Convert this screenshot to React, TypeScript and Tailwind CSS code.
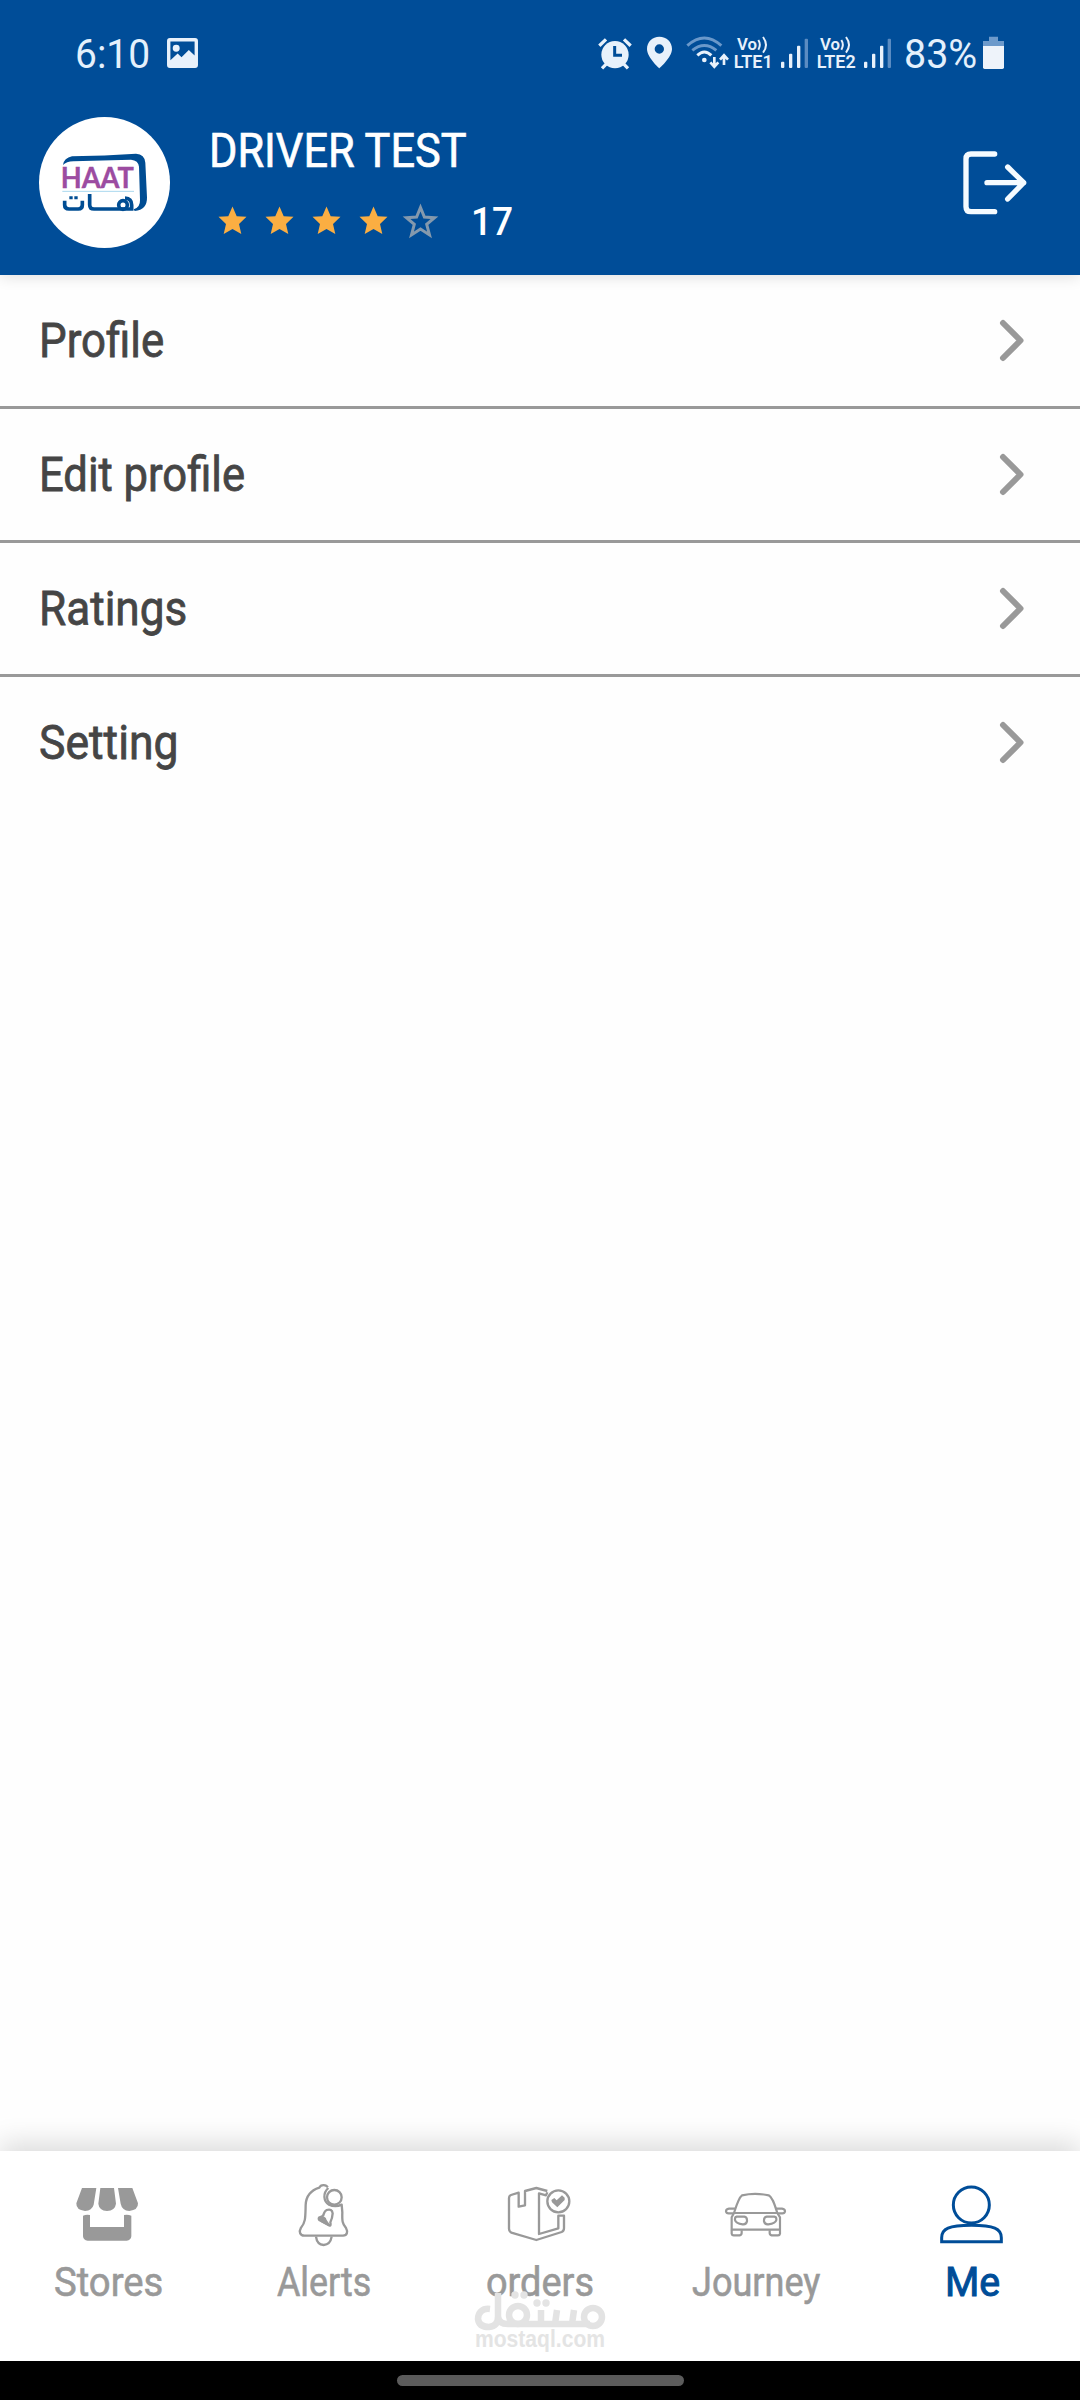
import { useLayoutEffect, useRef, useState } from "react";
import type { ReactNode } from "react";

/** One line of text, condensed or widened to an exact width. */
function FitText({ text, width, className }: { text: string; width: number; className?: string }) {
  const ref = useRef<HTMLSpanElement>(null);
  const [scale, setScale] = useState(1);
  useLayoutEffect(() => {
    if (ref.current) setScale(width / ref.current.offsetWidth);
  }, [width, text]);
  return (
    <span className={"block shrink-0 " + (className ?? "")} style={{ width }}>
      <span ref={ref} className="inline-block origin-left whitespace-nowrap" style={{ transform: `scaleX(${scale})` }}>
        {text}
      </span>
    </span>
  );
}

function VoLte({ label }: { label: string }) {
  return (
    <svg className="h-[42px] w-[44px] shrink-0 overflow-visible" viewBox="454 33 132 126" fill="#e8f1fb">
      <text x="472" y="90" fontFamily="Roboto" fontSize="47" fontWeight="600" textLength="60" lengthAdjust="spacingAndGlyphs">Vo</text>
      <path d="M536 60q9 14 0 29M550 51q18 24 0 47" fill="none" stroke="#e8f1fb" strokeWidth="6" />
      <text x="462" y="144" fontFamily="Roboto" fontSize="53" fontWeight="600" textLength="117" lengthAdjust="spacingAndGlyphs">{label}</text>
    </svg>
  );
}

function Signal() {
  return (
    <svg className="h-9 w-[27px] shrink-0" viewBox="603 42 81 108" fill="#e8f1fb">
      <rect x="603" y="125" width="10" height="19" rx="3" />
      <rect x="627" y="101" width="10" height="43" rx="3" />
      <rect x="651" y="77" width="10" height="67" rx="3" />
      <rect x="674" y="56" width="10" height="88" rx="3" fill="#5b8cc2" />
    </svg>
  );
}

function StatusBar() {
  return (
    <div className="flex h-[104px] items-start pt-[34px] font-['Roboto',sans-serif] text-[40px] leading-[36px] text-[#e4f0fc]">
      <FitText text="6:10" width={75} className="ml-[75px] mt-[3px]" />
      <svg className="ml-[17px] mt-[4px] h-[30px] w-[31px] shrink-0" viewBox="0 0 32 31">
        <path fillRule="evenodd" fill="#e8f1fb" d="M3 0H29Q32 0 32 3V28Q32 31 29 31H3Q0 31 0 28V3Q0 0 3 0ZM3.5 3.5V23L11 16L15 20L22.5 12.5L28.5 18V3.5ZM9.5 7A3.6 3.6 0 1 1 9.5 14.2A3.6 3.6 0 1 1 9.5 7Z" />
      </svg>
      <svg className="ml-[400px] mt-px h-9 w-[34px] shrink-0" viewBox="54 42 102 108">
        <g stroke="#e8f1fb" strokeWidth="10">
          <path d="M58 74L78 55M152 74L132 55M66 142L80 128M144 142L130 128" />
        </g>
        <circle cx="105" cy="101" r="41" fill="#e8f1fb" />
        <path d="M104 75V103H126" fill="none" stroke="#004d98" strokeWidth="9" />
      </svg>
      <svg className="ml-[15px] h-9 w-[25px] shrink-0" viewBox="201 42 75 108">
        <path fillRule="evenodd" fill="#e8f1fb" d="M238 50C217 50 201 66 201 87C201 112 238 145 238 145C238 145 276 112 276 87C276 66 260 50 238 50ZM238 73A14 14 0 1 1 238 101A14 14 0 1 1 238 73Z" />
      </svg>
      <svg className="ml-[14px] h-9 w-[43px] shrink-0" viewBox="318 42 129 108" fill="none" stroke="#e8f1fb" strokeWidth="9">
        <path d="M322 77Q373 31 424 77M337 91Q373 62 409 91" stroke="#6a98ca" />
        <path d="M352 106Q373 86 394 106" />
        <circle cx="373" cy="120" r="7" fill="#e8f1fb" stroke="none" />
        <path d="M403 111V139M391 127L403 140L415 127M432 135V107M420 119L432 106L444 119" strokeWidth="8" />
      </svg>
      <div className="-mt-[3px] ml-[2px] flex"><VoLte label="LTE1" /></div>
      <div className="ml-[6px] flex"><Signal /></div>
      <div className="-mt-[3px] ml-[6px] flex"><VoLte label="LTE2" /></div>
      <div className="ml-[6px] flex"><Signal /></div>
      <FitText text="83%" width={73} className="ml-[13px] mt-[3px]" />
      <svg className="ml-[6px] h-9 w-[21px] shrink-0" viewBox="549 42 63 108">
        <path d="M567 50H594V63H612V78H549V63H567Z" fill="#6d9acb" />
        <path d="M549 78H612V142Q612 147 607 147H554Q549 147 549 142Z" fill="#eef3fa" />
      </svg>
    </div>
  );
}

function Avatar() {
  return (
    <svg className="ml-[39px] mt-[13px] size-[131px] shrink-0 rounded-full bg-white" viewBox="27 21 393 393">
      <path
        fill="#004d93"
        d="M99 165Q102 144 126 139Q225 137 318 131Q344 132 346 158L351 262Q352 300 314 303L311 298Q331 292 330 270L327 170Q325 151 303 149L130 154Q109 155 99 165Z"
      />
      <text x="92" y="233" fontFamily="Lato" fontWeight="700" fontSize="88" fill="#9c4ca1" stroke="#9c4ca1" strokeWidth="1" textLength="220" lengthAdjust="spacingAndGlyphs">HAAT</text>
      <path d="M97 244H312" stroke="#a9d8ee" strokeWidth="3" />
      <g fill="none" stroke="#004d93" strokeWidth="11">
        <path d="M104 272V285Q104 297 117 297H145Q157 297 157 285V272" />
        <path d="M179 252V284Q179 297 192 297H305V285Q305 265 285 264" />
        <circle cx="279" cy="285" r="13" />
      </g>
      <path d="M118 259h10v9h-10zM133 259h10v9h-10z" fill="#004d93" />
    </svg>
  );
}

const STAR = "M0 -14.5L4.2 -4.8L14 -4.2L6.5 2.9L8.8 13L0 8L-8.8 13L-6.5 2.9L-14 -4.2L-4.2 -4.8Z";

function Stars() {
  return (
    <div className="ml-px flex items-start">
      {[0, 1, 2, 3].map((i) => (
        <svg key={i} className="h-9 w-[47px]" viewBox="-23.5 -18 47 36">
          <path d={STAR} fill="#fbae42" />
        </svg>
      ))}
      <svg className="h-9 w-[47px]" viewBox="-23.5 -18 47 36">
        <path
          transform="translate(0 0.5)"
          d="M0 -14L3.9 -4.4L14 -3.8L6.2 2.8L9 13.4L0 7.6L-9 13.4L-6.2 2.8L-14 -3.8L-3.9 -4.4Z"
          fill="none"
          stroke="#8499ad"
          strokeWidth="3"
        />
      </svg>
    </div>
  );
}

function Header() {
  return (
    <header className="relative z-10 h-[275px] bg-[#004d98] shadow-[0_2px_14px_rgba(0,0,0,0.12)]">
      <StatusBar />
      <div className="flex items-start">
        <Avatar />
        <div className="ml-[38px] flex flex-col font-['Roboto',sans-serif] text-white">
          <FitText text="DRIVER TEST" width={258} className="mt-[19px] ml-px text-[49px] leading-[56px] [-webkit-text-stroke:0.7px]" />
          <div className="mt-[24px] flex">
            <Stars />
            <FitText text="17" width={42} className="mt-px ml-[27px] text-[38px] leading-[37px] font-medium" />
          </div>
        </div>
        <svg className="mt-[47px] mr-[53px] ml-auto h-[64px] w-[64px]" viewBox="68 62 192 192" fill="none" stroke="#f5fbff" strokeWidth="16" strokeLinecap="round" strokeLinejoin="round">
          <path d="M163 71H92Q77 71 77 86V229Q77 244 92 244H163M140 157H250M202 110L250 157L202 206" />
        </svg>
      </div>
    </header>
  );
}

const ROWS = [
  { label: "Profile", width: 125 },
  { label: "Edit profile", width: 206 },
  { label: "Ratings", width: 148 },
  { label: "Setting", width: 140 },
];

function Menu() {
  return (
    <ul className="grow font-['Roboto',sans-serif] text-[48px] leading-[56px] text-[#454545] [-webkit-text-stroke:0.8px]">
      {ROWS.map((row) => (
        <li key={row.label} className="flex h-[134px] items-center justify-between border-b-[3px] border-[#999] pr-[55px] pl-[39px] last:border-transparent">
          <FitText text={row.label} width={row.width} />
          <svg className="h-[44px] w-[26px]" viewBox="0 0 26 44" fill="none" stroke="#999" strokeWidth="6" strokeLinecap="round" strokeLinejoin="round">
            <path d="M4 4L21.5 21.5L4 39" />
          </svg>
        </li>
      ))}
    </ul>
  );
}

const storesIcon = (
  <svg className="size-[72px]" viewBox="216 174 216 216" fill="#999">
    <path d="M246 204H289L281 254Q276 272 255 273Q228 270 229 250ZM301 204H342L348 251Q345 272 321 273Q297 271 295 251ZM354 204H397L414 250Q415 270 388 273Q366 271 362 251Z" />
    <path d="M249 287Q259 282 270 285V321H372V285Q383 282 394 287V349Q393 361 380 362H263Q250 361 249 349Z" />
  </svg>
);

const alertsIcon = (
  <svg className="size-[72px]" viewBox="864 174 216 216" fill="none" stroke="#999" strokeWidth="7" strokeLinejoin="round">
    <path d="M983 202C979 193 962 193 958 203C930 212 918 231 917 255C916 292 917 307 903 323C896 336 900 347 913 347H1029C1042 347 1044 335 1038 324C1027 311 1026 302 1027 277L1025 254Q1006 263 987 254C970 244 968 219 985 204" />
    <circle cx="1003" cy="232" r="22" />
    <path d="M948 350Q951 374 971 375Q991 374 995 350" />
    <path d="M980 270Q996 265 998 280Q997 295 991 307Q993 316 990 317L959 301Q954 297 958 292Q970 291 972 280Q974 273 980 270Z" />
    <path d="M961 295Q974 289 977 302L986 315L966 304Z" fill="#999" />
  </svg>
);

const ordersIcon = (
  <svg className="size-[72px]" viewBox="312 174 216 216" fill="none" stroke="#999" strokeWidth="7" strokeLinejoin="round">
    <path d="M442 213L409 204L375 213V256L356 260V218L333 225Q327 227 327 234V326Q327 335 334 338L409 360L485 336Q492 333 492 325V287H475V325L417 342V220L438 226L442 217" />
    <circle cx="475" cy="244" r="33" />
    <path d="M454 240L463 234L470 241L486 226L494 233L494 240L472 262L456 247Z" fill="#999" stroke="none" />
  </svg>
);

const journeyIcon = (
  <svg className="size-[72px]" viewBox="180 174 216 216" fill="none" stroke="#999" strokeWidth="6.5" strokeLinejoin="round">
    <path d="M222 279C230 253 236 233 246 226Q285 217 326 226C338 232 344 254 352 279H222L215 292V329H360V292L352 279" />
    <path d="M225 266H207Q198 267 198 274Q199 281 208 280H221M348 266H366Q375 267 375 274Q374 281 365 280H352" />
    <path d="M230 290H253Q262 291 261 304Q259 314 248 313Q227 310 225 300Q224 291 230 290ZM343 290H320Q311 291 312 304Q314 314 325 313Q347 310 349 300Q350 291 343 290Z" />
    <path d="M215 329V341Q216 346 221 346H239Q245 345 245 339V331M360 329V341Q359 346 354 346H335Q329 345 329 339V331" />
  </svg>
);

const meIcon = (
  <svg className="size-[72px]" viewBox="828 174 216 216" fill="none" stroke="#004d98" strokeWidth="9">
    <circle cx="934" cy="255" r="54" />
    <path d="M845 365V353C845 326 866 316 934 316C1002 316 1024 326 1024 353V365Z" />
  </svg>
);

const TABS: { label: string; width: number; icon: ReactNode; active?: boolean }[] = [
  { label: "Stores", width: 109, icon: storesIcon },
  { label: "Alerts", width: 94, icon: alertsIcon },
  { label: "orders", width: 108, icon: ordersIcon },
  { label: "Journey", width: 128, icon: journeyIcon },
  { label: "Me", width: 55, icon: meIcon, active: true },
];

function BottomNav() {
  return (
    <nav className="relative flex h-[210px] bg-white pt-[27px] font-['Roboto',sans-serif] text-[40px] leading-[48px] shadow-[0_-8px_26px_rgba(0,0,0,0.14)] [-webkit-text-stroke:0.6px]">
      {TABS.map((tab) => (
        <div key={tab.label} className={"flex flex-1 flex-col items-center gap-[9px] " + (tab.active ? "text-[#004d98] [-webkit-text-stroke:1px]" : "text-[#999]")}>
          {tab.icon}
          <FitText text={tab.label} width={tab.width} />
        </div>
      ))}
      <svg className="absolute top-[132px] left-[470px] h-[76px] w-[140px] overflow-visible [-webkit-text-stroke:0]" viewBox="470 2283 140 76" fill="#e4e4e4">
        <g fill="none" stroke="#e3e3e3" strokeWidth="6.5" strokeLinecap="butt">
          <path d="M490 2309C482 2308 478 2313 478 2319Q479 2327 489 2327Q498 2326 498 2317V2293" />
          <path d="M498 2317Q499 2324 508 2324H590" />
          <circle cx="518" cy="2315" r="9" />
          <circle cx="593" cy="2317" r="9" />
          <path d="M541 2324V2310M555 2324L557 2310M572 2324L574 2310" />
        </g>
        <circle cx="515" cy="2295" r="3.7" />
        <circle cx="524" cy="2295" r="3.7" />
        <circle cx="537" cy="2303" r="3.7" />
        <circle cx="546" cy="2303" r="3.7" />
        <text x="475" y="2347" fontFamily="Liberation Sans" fontWeight="700" fontSize="24" textLength="130" lengthAdjust="spacingAndGlyphs">mostaql.com</text>
      </svg>
    </nav>
  );
}

export default function App() {
  return (
    <div className="flex h-[2400px] w-[1080px] flex-col overflow-hidden bg-[#fefefe]">
      <Header />
      <Menu />
      <BottomNav />
      <div className="flex h-[39px] justify-center bg-black pt-[14px]">
        <div className="h-[11px] w-[287px] rounded-full bg-[#5c5c5c]" />
      </div>
    </div>
  );
}
